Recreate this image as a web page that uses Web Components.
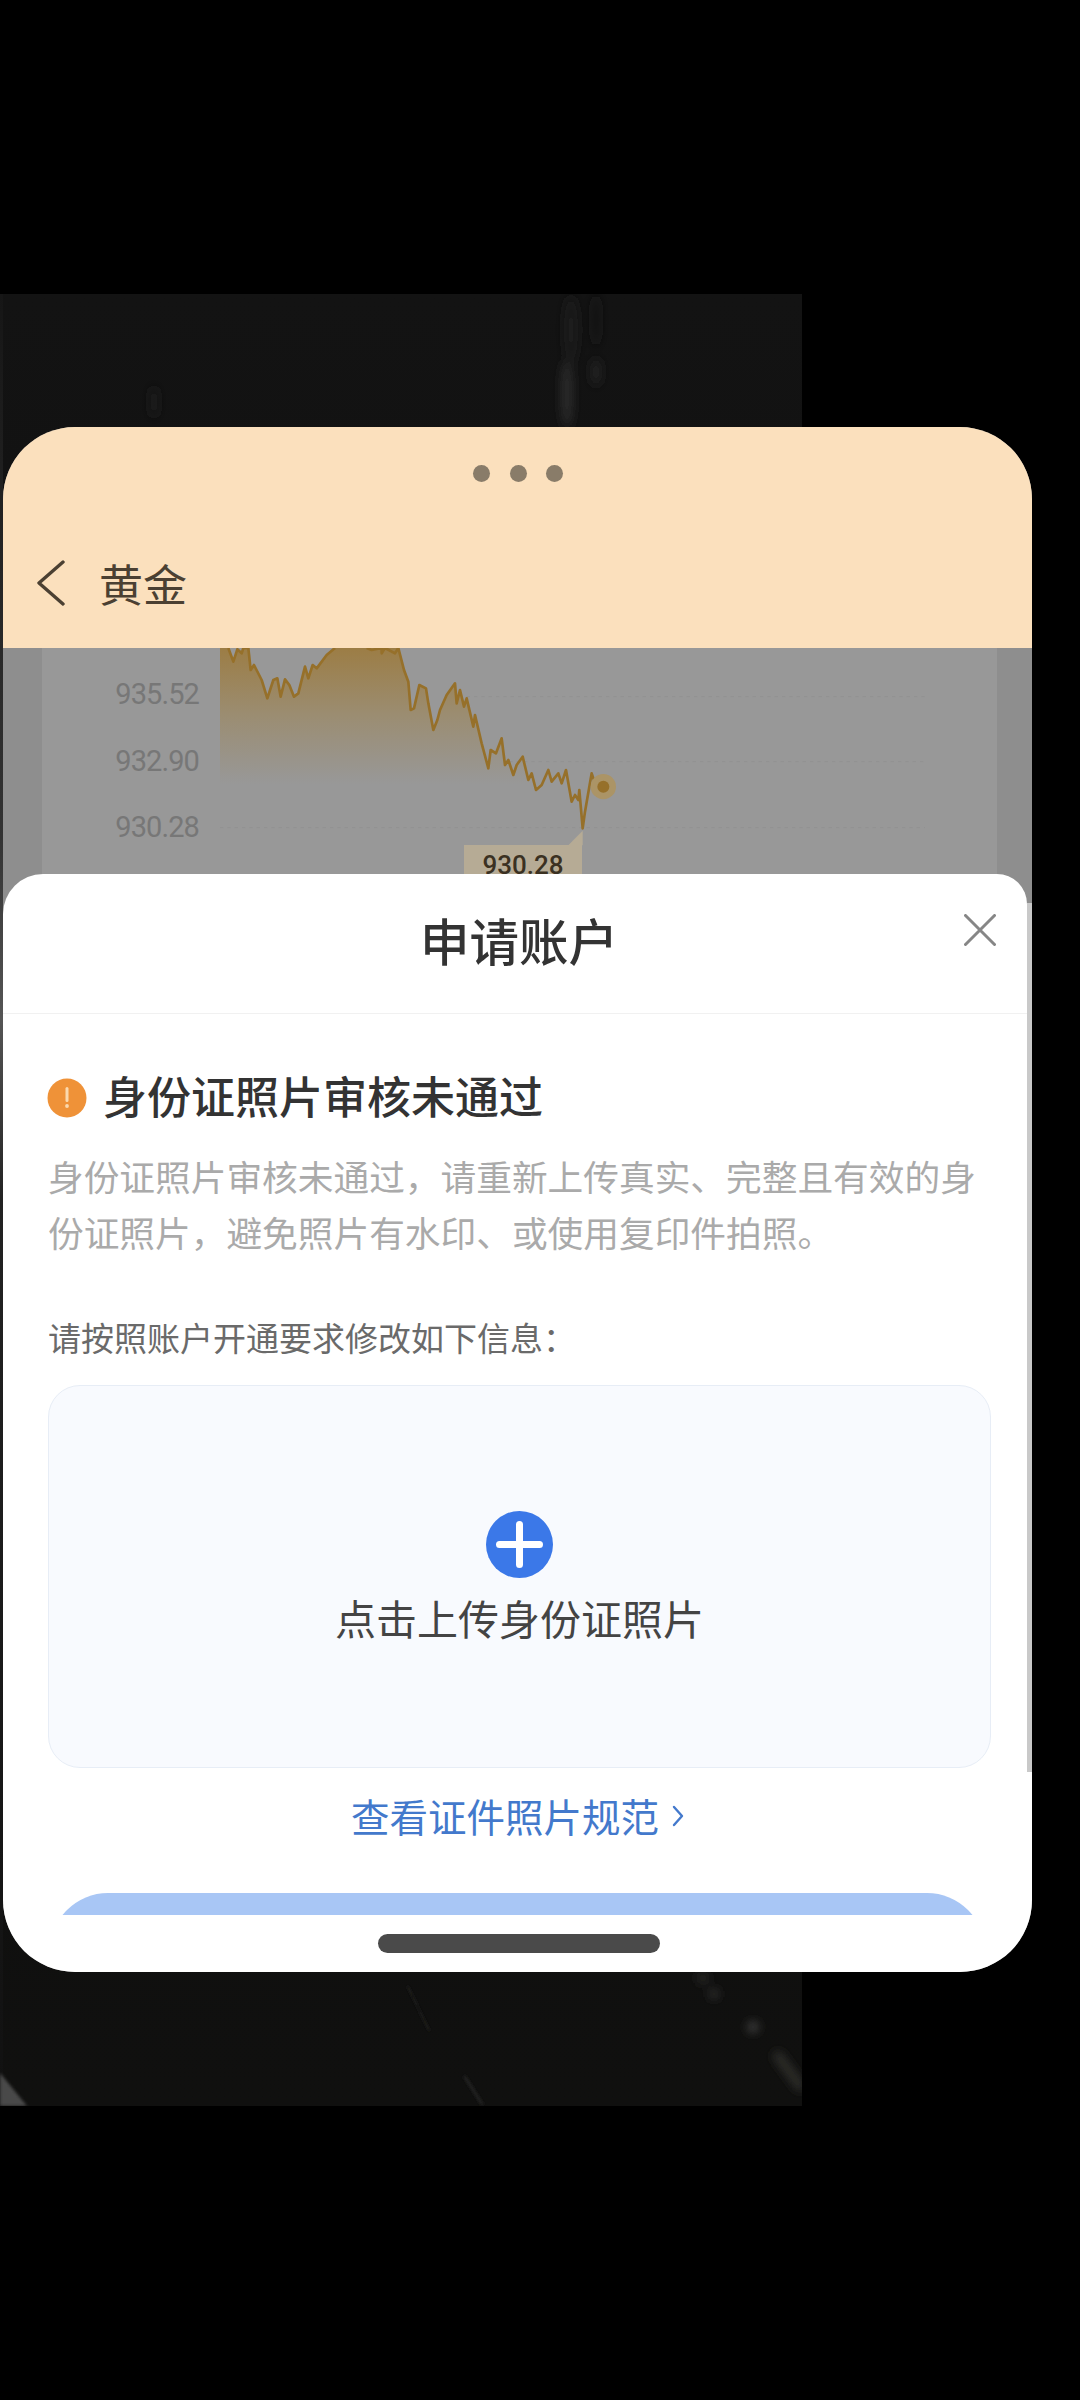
<!DOCTYPE html>
<html lang="zh-CN">
<head>
<meta charset="utf-8">
<title>申请账户</title>
<style>
html,body{margin:0;padding:0;background:#000;}
body{font-family:"Noto Sans CJK SC","Noto Sans",sans-serif;}
</style>
</head>
<body>
<phone-screen>
	<float-window>
		<window-header slot="header">黄金</window-header>
		<gold-chart slot="page"></gold-chart>
		<account-sheet slot="sheet" heading="申请账户">
			<notice-block heading="身份证照片审核未通过">身份证照片审核未通过，请重新上传真实、完整且有效的身份证照片，避免照片有水印、或使用复印件拍照。</notice-block>
			<upload-box label="请按照账户开通要求修改如下信息：">点击上传身份证照片</upload-box>
			<guide-link>查看证件照片规范</guide-link>
		</account-sheet>
	</float-window>
</phone-screen>

<script>
(function() {
	const define = (tag, html) => {
		const template = document.createElement('template');
		template.innerHTML = html;

		class Element extends HTMLElement {
			constructor() {
				super();
				this.attachShadow({mode: 'open'});
				this.shadowRoot.appendChild(template.content.cloneNode(true));

				//attributes go to the nodes marked with data-attr
				this.shadowRoot.querySelectorAll('[data-attr]').forEach((node) => {
					node.textContent = this.getAttribute(node.dataset.attr) || '';
				});
			}
		}

		customElements.define(tag, Element);
	};

	define('phone-screen', `
		<style>
		:host{display:block;position:relative;height:2400px;padding-top:294px;box-sizing:border-box;overflow:hidden;background:#000;}
		.wallpaper{display:block;width:802px;height:1812px;}
		.holder{position:absolute;left:3px;top:427px;}
		</style>
		<svg class="wallpaper" viewBox="0 294 802 1812" aria-hidden="true">
			<defs>
				<linearGradient id="wall" x1="0" y1="0" x2="0" y2="1">
					<stop offset="0" stop-color="#131313"/>
					<stop offset=".5" stop-color="#0e0e0e"/>
					<stop offset="1" stop-color="#10100f"/>
				</linearGradient>
				<linearGradient id="edge" x1="0" y1="0" x2="0" y2="1">
					<stop offset="0" stop-color="#161616"/>
					<stop offset=".3" stop-color="#333"/>
					<stop offset=".4" stop-color="#555"/>
					<stop offset=".5" stop-color="#222"/>
					<stop offset="1" stop-color="#111"/>
				</linearGradient>
				<filter id="soft" filterUnits="userSpaceOnUse" x="0" y="294" width="802" height="1812"><feGaussianBlur stdDeviation="5"/></filter>
				<filter id="thin" filterUnits="userSpaceOnUse" x="0" y="294" width="802" height="1812"><feGaussianBlur stdDeviation="1.6"/></filter>
			</defs>
			<rect x="0" y="294" width="802" height="1812" fill="url(#wall)"/>
			<rect x="0" y="294" width="3" height="1812" fill="url(#edge)"/>
			<g filter="url(#soft)">
				<ellipse cx="567" cy="394" rx="6" ry="34" fill="#2c2c2c"/>
				<ellipse cx="571" cy="330" rx="7" ry="34" fill="#1b1b1b"/>
				<ellipse cx="596" cy="372" rx="5" ry="14" fill="#212121"/>
				<ellipse cx="596" cy="320" rx="4" ry="26" fill="#181818"/>
				<ellipse cx="154" cy="402" rx="4" ry="16" fill="#1e1e1e"/>
			</g>
			<g filter="url(#thin)" stroke-linecap="round" fill="none">
				<path d="M408 1987L429 2030" stroke="#1d1d1c" stroke-width="2"/>
				<path d="M465 2077L482 2104" stroke="#222220" stroke-width="3"/>
			</g>
			<g filter="url(#soft)">
				<path d="M778 2056L800 2086" stroke="#2e2e2c" stroke-width="10" stroke-linecap="round"/>
				<circle cx="714" cy="1994" r="5" fill="#333331"/>
				<circle cx="703" cy="1978" r="6" fill="#282826"/>
				<circle cx="753" cy="2027" r="6" fill="#3e3e3c"/>
			</g>
			<path d="M0 2073L27 2106H0Z" fill="#484848" filter="url(#thin)"/>
		</svg>
		<div class="holder"><slot></slot></div>
	`);

	define('float-window', `
		<style>
		:host{display:flex;flex-direction:column;width:1029px;height:1545px;border-radius:72px;overflow:hidden;background:#8e8e8e;}
		.sheet{display:flex;flex:1;min-height:0;}
		</style>
		<slot name="header"></slot>
		<slot name="page"></slot>
		<div class="sheet"><slot name="sheet"></slot></div>
	`);

	define('window-header', `
		<style>
		:host{display:block;height:221px;background:#fbe0bd;color:#4b4032;}
		.dots{display:flex;justify-content:center;gap:19.5px;padding:38px 0 0 1px;}
		.dots i{display:block;width:17px;height:17px;border-radius:50%;background:#897c69;}
		.nav{display:flex;align-items:center;gap:33px;height:60px;margin-top:71px;padding-left:33px;}
		svg{display:block;flex:none;}
		.title{font-size:44px;line-height:60px;}
		</style>
		<div class="dots"><i></i><i></i><i></i></div>
		<div class="nav">
			<svg width="30" height="46" viewBox="0 0 30 46" fill="none" stroke="#4b4032" stroke-width="3.4" stroke-linecap="round" stroke-linejoin="round"><path d="M27 2L3 23L27 44"/></svg>
			<div class="title"><slot></slot></div>
		</div>
	`);

	define('gold-chart', `
		<style>
		:host{display:flex;height:226px;margin:0 35px 0 39px;background:#989898;overflow:hidden;font-family:Roboto,"Noto Sans",sans-serif;}
		.axis{flex:none;width:157px;padding-top:13px;box-sizing:border-box;text-align:right;font-size:29px;line-height:66.5px;letter-spacing:-.9px;color:#777;}
		.plot{position:relative;flex:1;margin-left:21px;}
		svg{display:block;filter:blur(.4px);}
		.tip{position:absolute;left:244px;top:197px;width:118px;height:40px;background:#b6ab95;color:#3b3122;font-size:26px;font-weight:500;line-height:40px;text-align:center;}
		</style>
		<div class="axis"><div>935.52</div><div>932.90</div><div>930.28</div></div>
		<div class="plot">
			<svg width="777" height="226" viewBox="120 24 2331 678" fill="none">
				<defs>
					<linearGradient id="area" gradientUnits="userSpaceOnUse" x1="0" y1="24" x2="0" y2="432">
						<stop offset="0" stop-color="#9c7d45"/>
						<stop offset=".5" stop-color="#9b8d72"/>
						<stop offset="1" stop-color="#989898"/>
					</linearGradient>
				</defs>
				<g stroke="#919191" stroke-width="3" stroke-dasharray="10 12">
					<path d="M860 170H2235"/>
					<path d="M900 365H2235"/>
					<path d="M120 563H2235"/>
				</g>
				<polygon fill="url(#area)" points="120,24 145,24 160,65 172,28 185,40 190,24 205,24 212,90 222,75 245,120 262,175 280,120 292,115 302,170 315,118 328,135 342,170 355,160 375,80 385,115 398,75 410,85 440,45 465,24 645,24 655,24 672,90 685,125 692,210 702,205 718,135 738,145 745,190 760,270 772,240 780,210 800,165 825,130 830,190 840,150 852,200 860,175 880,260 885,225 905,310 925,385 932,330 948,340 965,295 975,375 985,360 1000,405 1010,375 1028,350 1045,420 1055,432 120,432"/>
				<polyline stroke="#96702a" stroke-width="8" stroke-linejoin="round" points="145,24 160,65 172,28 185,40 190,24 205,24 212,90 222,75 245,120 262,175 280,120 292,115 302,170 315,118 328,135 342,170 355,160 375,80 385,115 398,75 410,85 440,45 465,24"/>
				<polyline stroke="#96702a" stroke-width="8" stroke-linejoin="round" points="560,24 575,30 605,24 605,40 615,24 645,40 655,24 672,90 685,125 692,210 702,205 718,135 738,145 745,190 760,270 772,240 780,210 800,165 825,130 830,190 840,150 852,200 860,175 880,260 885,225 905,310 925,385 932,330 948,340 965,295 975,375 985,360 1000,405 1010,375 1028,350 1045,420 1055,400 1068,450 1085,435 1105,390 1115,425 1135,400 1145,430 1158,390 1175,485 1185,465 1195,480 1198,450 1208,565 1215,515 1235,400 1245,430 1270,440"/>
				<circle cx="1270" cy="440" r="38" fill="#ab9466"/>
				<circle cx="1270" cy="440" r="18" fill="#96702a"/>
				<polygon fill="#b6ab95" points="1165,616 1208,572 1208,616"/>
			</svg>
			<div class="tip">930.28</div>
		</div>
	`);

	define('account-sheet', `
		<style>
		:host{display:flex;flex:1;min-width:0;}
		.sheet{flex:1;min-width:0;display:flex;flex-direction:column;background:#fff;border-radius:40px 30px 0 0;}
		.rail{flex:none;width:5px;background:linear-gradient(#8e8e8e 0 29px,#c9c9c9 29px 898px,#fff 898px);}
		.head{display:grid;grid-template-columns:1fr auto 1fr;align-items:center;height:139px;border-bottom:1px solid #f1f1f1;}
		.title{grid-column:2;margin:-8px 0 0 8px;font-size:49.5px;font-weight:500;line-height:64px;color:#333;}
		.close{justify-self:end;align-self:start;margin:40px 31px 0 0;display:block;}
		.body{height:901px;padding:0 36px 0 45px;overflow:hidden;box-sizing:border-box;}
		.submit{height:120px;margin:52px 6px 0 2px;border-radius:58px;background:#a8c6f5;}
		.foot{flex:none;height:57px;display:flex;justify-content:center;padding:19px 0 0 7px;box-sizing:border-box;}
		.bar{width:282px;height:19px;border-radius:10px;background:#4a4a4a;}
		</style>
		<div class="sheet">
			<div class="head">
				<div class="title" data-attr="heading"></div>
				<svg class="close" width="32" height="32" viewBox="0 0 32 32" fill="none" stroke="#868686" stroke-width="3" stroke-linecap="round"><path d="M1.5 1.5L30.5 30.5M30.5 1.5L1.5 30.5"/></svg>
			</div>
			<div class="body">
				<slot></slot>
				<div class="submit"></div>
			</div>
			<div class="foot"><div class="bar"></div></div>
		</div>
		<div class="rail"></div>
	`);

	define('notice-block', `
		<style>
		:host{display:block;padding-top:57px;}
		.row{display:flex;align-items:center;gap:16px;margin-left:-1px;}
		svg{display:block;flex:none;}
		.title{margin-top:-6px;font-size:44px;font-weight:500;line-height:60px;color:#333;}
		.text{margin-top:23px;font-size:35.7px;line-height:56px;color:#aaa;}
		</style>
		<div class="row">
			<svg width="40" height="40" viewBox="0 0 40 40"><circle cx="20" cy="20" r="19.5" fill="#ef9238"/><rect x="18.5" y="9" width="3" height="15" rx="1.5" fill="#fbd9ae"/><circle cx="20" cy="28" r="1.9" fill="#fbd9ae"/></svg>
			<div class="title" data-attr="heading"></div>
		</div>
		<div class="text"><slot></slot></div>
	`);

	define('upload-box', `
		<style>
		:host{display:block;padding-top:54px;}
		.label{font-size:33px;line-height:46px;color:#6a6a6a;}
		.box{display:flex;flex-direction:column;align-items:center;height:383px;margin-top:25px;padding-top:125px;box-sizing:border-box;border:1px solid #e7edf6;border-radius:32px;background:#f8fafe;}
		svg{display:block;flex:none;}
		.text{margin-top:11px;font-size:41px;line-height:56px;color:#444;}
		</style>
		<div class="label" data-attr="label"></div>
		<div class="box">
			<svg width="67" height="67" viewBox="0 0 67 67"><circle cx="33.5" cy="33.5" r="33.5" fill="#3b78e8"/><path d="M13.5 33.5H53.5M33.5 13.5V53.5" stroke="#fff" stroke-width="7" stroke-linecap="round"/></svg>
			<div class="text"><slot></slot></div>
		</div>
	`);

	define('guide-link', `
		<style>
		:host{display:flex;justify-content:center;align-items:center;gap:13px;height:50px;margin:23px 4px 0 0;font-size:38.5px;color:#4379cc;}
		svg{display:block;flex:none;}
		span{margin-top:-2px;}
		</style>
		<span><slot></slot></span>
		<svg width="12" height="22" viewBox="0 0 12 22" fill="none" stroke="#4379cc" stroke-width="2.4" stroke-linecap="round" stroke-linejoin="round"><path d="M2 2L10 11L2 20"/></svg>
	`);
})();
</script>
</body>
</html>
